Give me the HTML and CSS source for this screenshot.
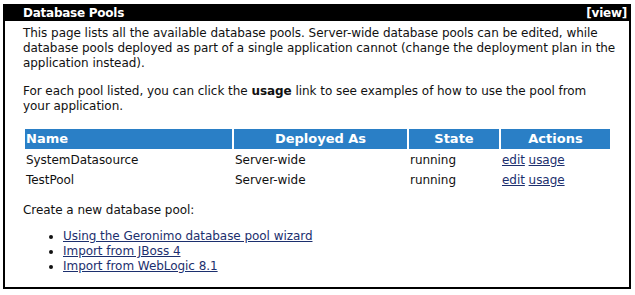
FILE: index.html
```html
<!DOCTYPE html>
<html lang="en">
<head>
  <meta charset="UTF-8" />
  <title>Database Pools</title>
  <link rel="stylesheet" href="styles.css">
</head>
<body>

  <div class="portlet">
    <div class="portlet-title">
      <span class="title-text">Database Pools</span>
      <a href="#" class="title-link">[view]</a>
    </div>

    <div class="portlet-body">
      <p>This page lists all the available database pools. Server-wide database pools can be edited, while
        database pools deployed as part of a single application cannot (change the deployment plan in the
        application instead).</p>

      <p>For each pool listed, you can click the <b>usage</b> link to see examples of how to use the pool from<br>
        your application.</p>

      <table class="pools">
        <tr>
          <th class="col-name">Name</th>
          <th class="col-deployed">Deployed As</th>
          <th class="col-state">State</th>
          <th class="col-actions">Actions</th>
        </tr>
        <tr>
          <td>SystemDatasource</td>
          <td>Server-wide</td>
          <td>running</td>
          <td><a href="#">edit</a> <a href="#">usage</a></td>
        </tr>
        <tr>
          <td>TestPool</td>
          <td>Server-wide</td>
          <td>running</td>
          <td><a href="#">edit</a> <a href="#">usage</a></td>
        </tr>
      </table>

      <p class="create">Create a new database pool:</p>
      <ul class="create-list">
        <li><a href="#">Using the Geronimo database pool wizard</a></li>
        <li><a href="#">Import from JBoss 4</a></li>
        <li><a href="#">Import from WebLogic 8.1</a></li>
      </ul>
    </div>
  </div>

</body>
</html>
```

FILE: styles.css
```css
/* ---------------- GENERAL ---------------- */
body, html {
  margin: 0;
  background: #ffffff;
  font-family: "DejaVu Sans", Verdana, sans-serif;
  font-size: 12px;
  letter-spacing: -0.05px;
  color: #111111;
}

a {
  color: #1c2f6e;
  text-decoration: underline;
}

/* ---------------- PORTLET BOX ---------------- */
.portlet {
  margin: 4px 4px 3px 3px;
  height: 285px;
  box-sizing: border-box;
  border: 2px solid #000000;
  border-top: 0;
}

.portlet-title {
  display: flex;
  justify-content: space-between;
  align-items: center;
  height: 17px;
  padding: 0 4px 0 20px;
  background: #000000;
  color: #ffffff;
  font-weight: bold;
  letter-spacing: -0.25px;
  margin: 0 -2px;
}

.portlet-title .title-link {
  color: #ffffff;
  text-decoration: none;
}

.portlet-body {
  padding: 5px 8px 0 18px;
  line-height: 15px;
}

.portlet-body p {
  margin: 0 0 13px 0;
}

/* ---------------- TABLE ---------------- */
.pools {
  width: 589px;
  border-spacing: 2px;
  margin: 4px 0 12px 0;
}

.pools th {
  background: #2a7fc6;
  color: #ffffff;
  font-size: 13px;
  letter-spacing: 0;
  font-weight: bold;
  text-align: center;
  padding: 2px 1px;
  line-height: 16px;
}

.pools th.col-name {
  text-align: left;
  width: 205px;
}

.pools th.col-deployed { width: 171px; }
.pools th.col-state { width: 88px; }

.pools td {
  padding: 1px 1px;
  line-height: 16px;
}

/* ---------------- CREATE LIST ---------------- */
.portlet-body p.create {
  margin-bottom: 11px;
}

.create-list {
  margin: 0;
  padding-left: 40px;
}
```
